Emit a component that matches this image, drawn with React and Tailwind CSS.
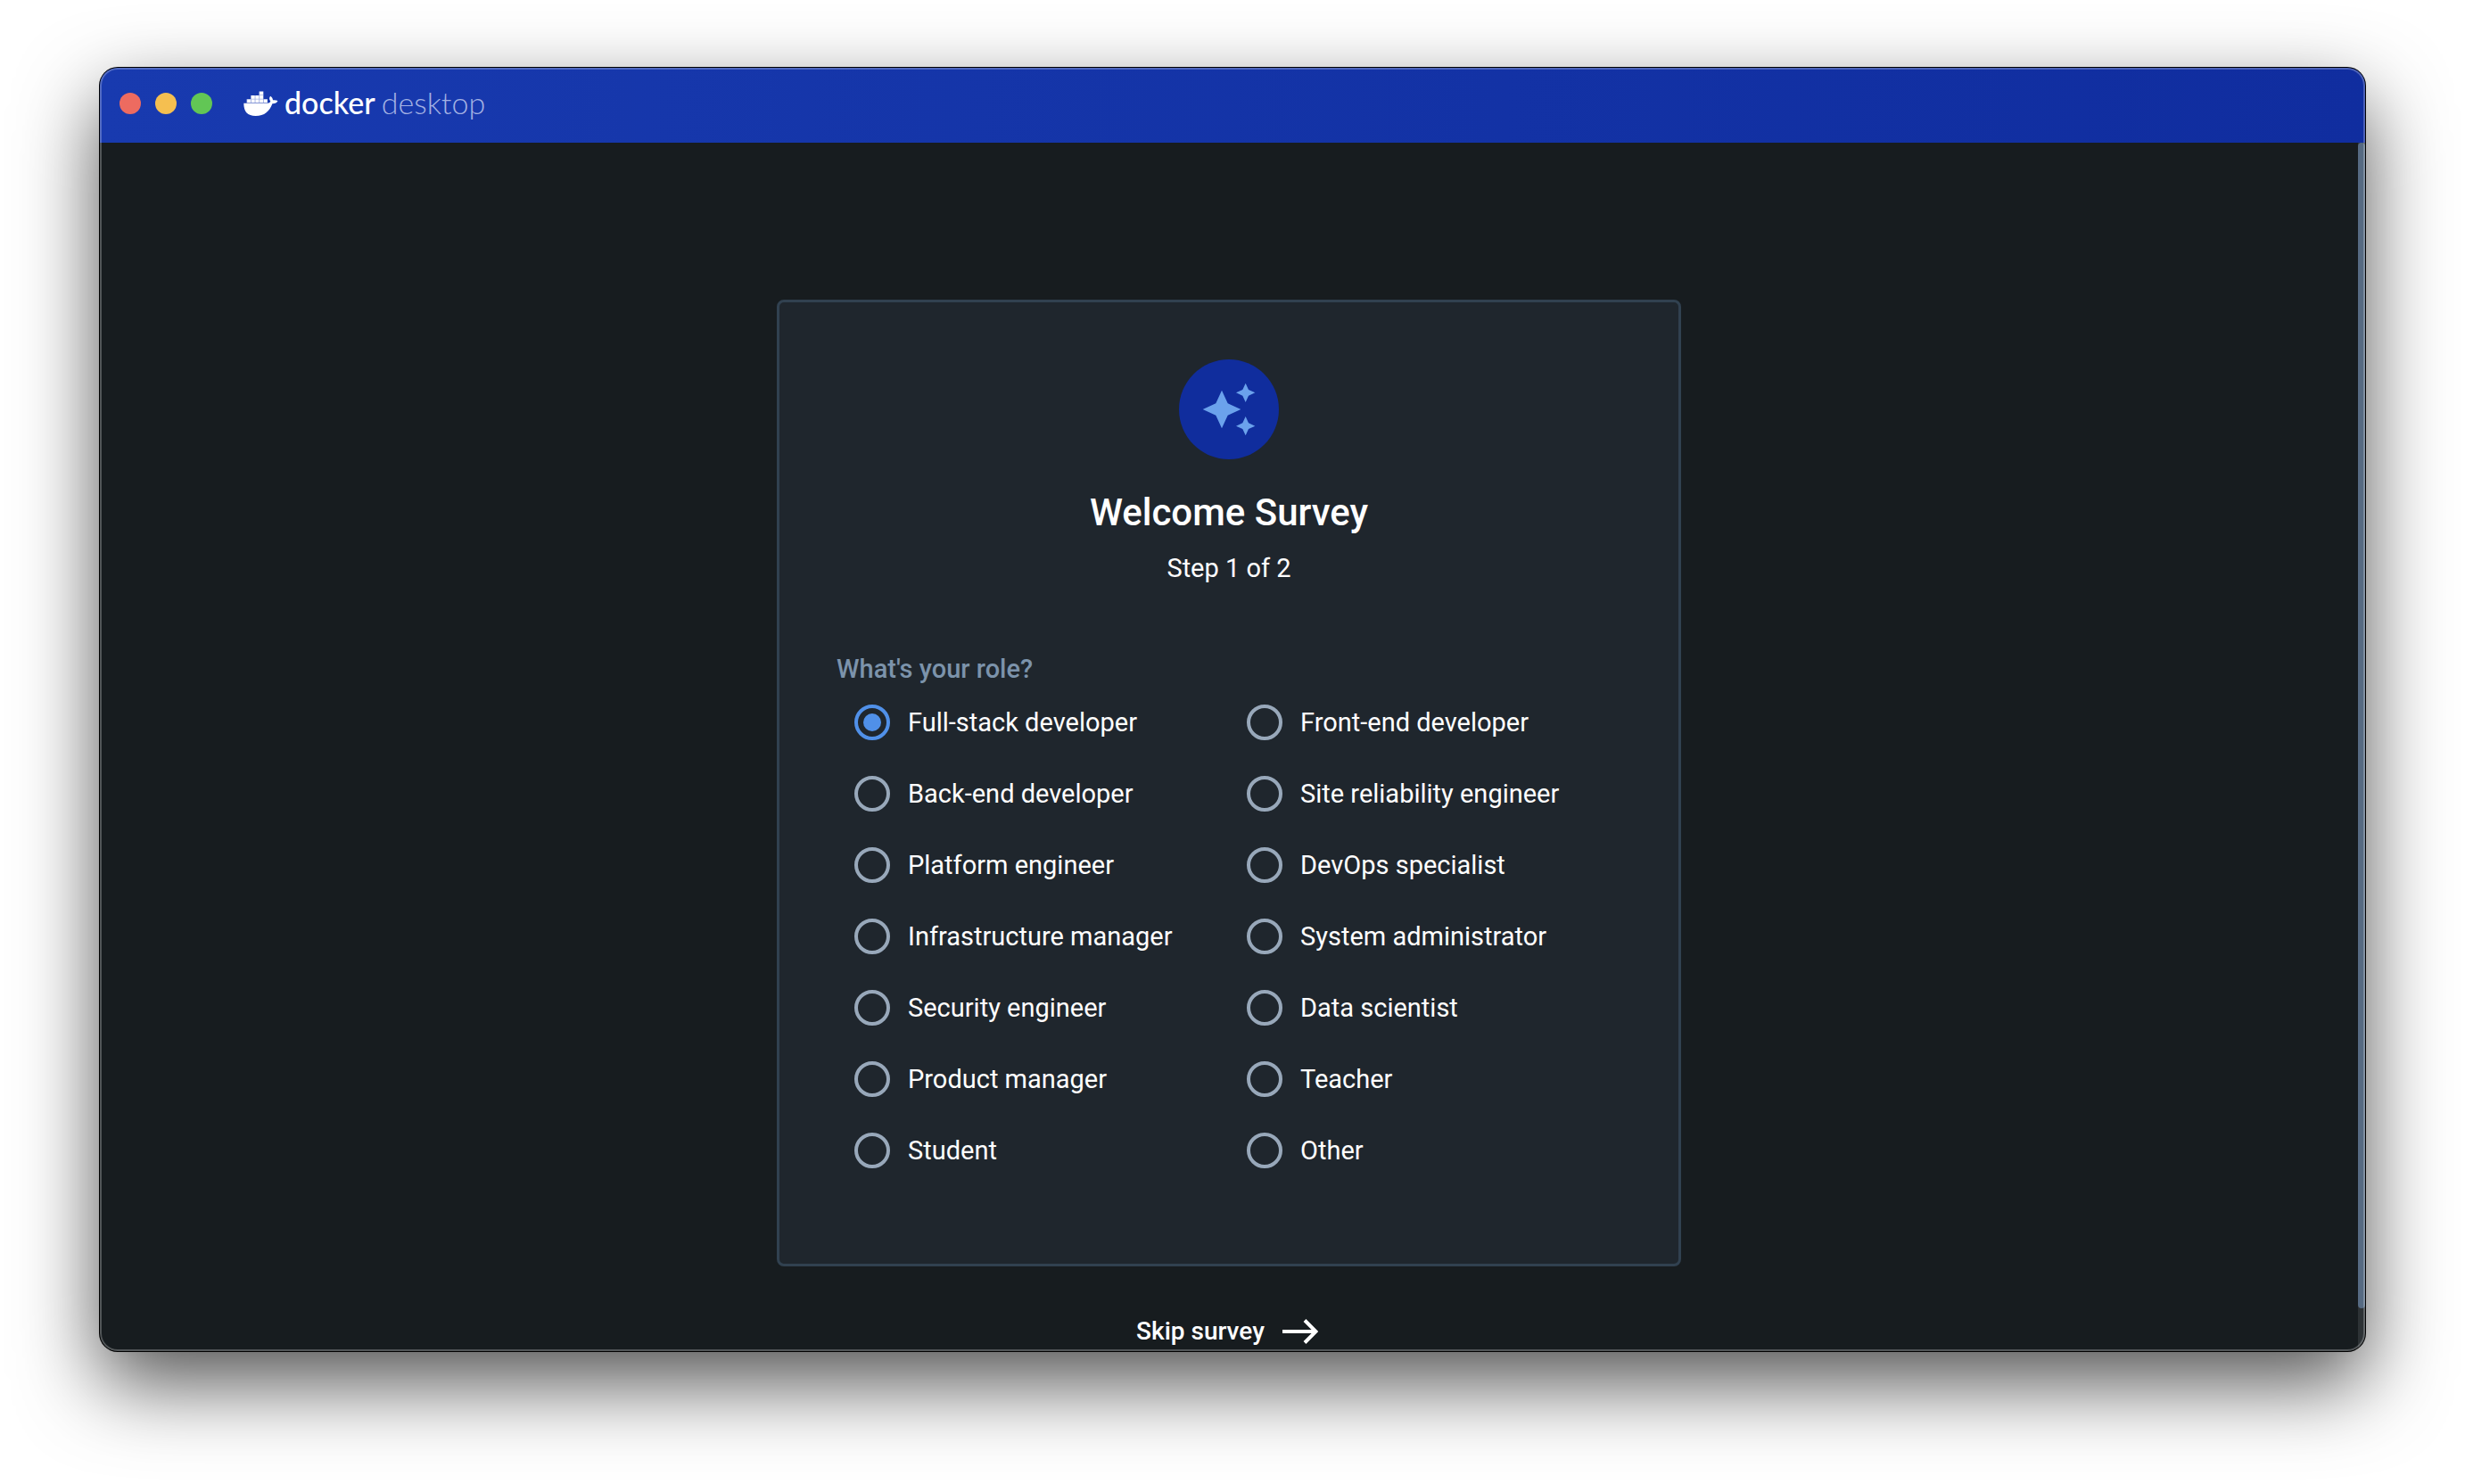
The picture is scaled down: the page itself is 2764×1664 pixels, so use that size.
const ROLES = [
  'Full-stack developer', 'Front-end developer',
  'Back-end developer', 'Site reliability engineer',
  'Platform engineer', 'DevOps specialist',
  'Infrastructure manager', 'System administrator',
  'Security engineer', 'Data scientist',
  'Product manager', 'Teacher',
  'Student', 'Other',
];

function Whale() {
  return (
    <svg className="h-7 w-10" viewBox="0 0 40 28" aria-hidden="true">
      <path d="M3.500 9.200H8.100V4.900H17.400V0.500H22.500V9.200H27V13.500H3.500Z" fill="#a3b1e3" />
      <g fill="white">
        <path d="M0.3 13.800H26.6C28.6 13.800 29.800 13 30.300 11.600C28.700 9.700 28.700 7.300 30.200 5.800C32 7 32.900 8.700 33 10.300C34.700 10 36.800 10.200 38.500 11C37.400 13.300 35.400 14.300 32.400 14.200C29.300 22.700 23.600 28 13.600 28C4.600 28 0.300 23.200 0.300 13.800Z" />
        <path d="M18.200 0.700H22V4.300H18.200zM8.900 5.100H12.600V8.700H8.900zM13.500 5.100H17.300V8.700H13.500zM18.200 5.100H22V8.700H18.200z" />
        <path d="M4.200 9.500H8V13.100H4.200zM8.900 9.500H12.600V13.100H8.900zM13.500 9.500H17.300V13.100H13.500zM18.200 9.500H22V13.100H18.200zM22.900 9.500H26.700V13.100H22.900z" />
      </g>
    </svg>
  );
}

function TitleBar() {
  return (
    <header className="flex h-[84px] shrink-0 items-center bg-linear-to-r from-[#183aaf] to-[#102d9f] px-[22px] pb-1">
      <div className="flex gap-4">
        <button type="button" aria-label="Close" className="size-6 rounded-full bg-[#ed6b60]" />
        <button type="button" aria-label="Minimize" className="size-6 rounded-full bg-[#f5bf50]" />
        <button type="button" aria-label="Zoom" className="size-6 rounded-full bg-[#62c655]" />
      </div>
      <div className="ml-[35px] flex items-center gap-1.5">
        <Whale />
        <p className="flex gap-[7px] pb-0.5 font-['Lato',sans-serif] text-[34px] leading-10 text-white">
          <span className="font-medium">docker</span>
          <span className="font-light text-[#a3b1e3]">desktop</span>
        </p>
      </div>
    </header>
  );
}

function Role({ name, checked }) {
  return (
    <label className="flex h-20 items-center gap-5 px-5 text-[29px] leading-10 text-white">
      <input
        type="radio"
        name="role"
        value={name}
        defaultChecked={checked}
        className="size-10 shrink-0 appearance-none rounded-full border-4 border-[#98a8ba] bg-clip-content p-1.5 checked:border-[#5090e8] checked:bg-[#5090e8]"
      />
      <span>{name}</span>
    </label>
  );
}

function Survey() {
  return (
    <section className="w-full max-w-[1014px] rounded-lg border-3 border-[#314150] bg-[#1f262d] px-16 pt-16 pb-[87px]">
      <div className="flex flex-col items-center text-center text-white">
        <div className="flex size-28 items-center justify-center rounded-full bg-[#102d9d]">
          <svg className="size-16" viewBox="0 0 24 24" fill="#6ba2ec" aria-hidden="true">
            <path d="m19 9 1.25-2.75L23 5l-2.75-1.25L19 1l-1.25 2.75L15 5l2.75 1.25L19 9zm-7.5.5L9 4 6.5 9.5 1 12l5.500 2.500L9 20l2.500-5.500L17 12l-5.500-2.500zM19 15l-1.250 2.750L15 19l2.750 1.250L19 23l1.250-2.750L23 19l-2.750-1.250L19 15z" />
          </svg>
        </div>
        <h1 className="mt-8 text-[42px] leading-14 font-medium">Welcome Survey</h1>
        <p className="mt-3.5 text-[29px] leading-10">Step 1 of 2</p>
      </div>
      <fieldset className="mt-[73px]">
        <legend className="text-[29px] leading-10 font-medium text-[#7c93ab]">What's your role?</legend>
        <div className="grid grid-cols-2">
          {ROLES.map((name, i) => <Role key={name} name={name} checked={i === 0} />)}
        </div>
      </fieldset>
    </section>
  );
}

export default function App() {
  return (
    <div className="min-h-screen bg-white px-28 pt-19 pb-37 font-['Roboto',sans-serif]">
      <div className="relative flex flex-col overflow-hidden rounded-[20px] bg-[#171c1f] shadow-[0_0_0_1px_#000,0_36px_90px_rgba(0,0,0,0.68)] after:pointer-events-none after:absolute after:inset-0 after:rounded-[20px] after:border-2 after:border-white/25">
        <TitleBar />
        <div className="flex">
          <main className="flex grow flex-col items-center pt-44">
            <Survey />
            <button type="button" className="mt-[51px] mr-1 flex h-11 items-center gap-5 text-[28px] leading-10 font-medium text-white">
              Skip survey
              <svg className="h-7 w-10" viewBox="0 0 40 28" fill="none" stroke="white" strokeWidth="4" aria-hidden="true">
                <path d="M0 14H38" />
                <path d="M25 1.500L37.500 14L25 26.500" />
              </svg>
            </button>
          </main>
          <div className="flex w-2 flex-col bg-[#2d3235]">
            <div className="grow-27 rounded-full bg-[#566a82]" />
            <div className="grow" />
          </div>
        </div>
      </div>
    </div>
  );
}
